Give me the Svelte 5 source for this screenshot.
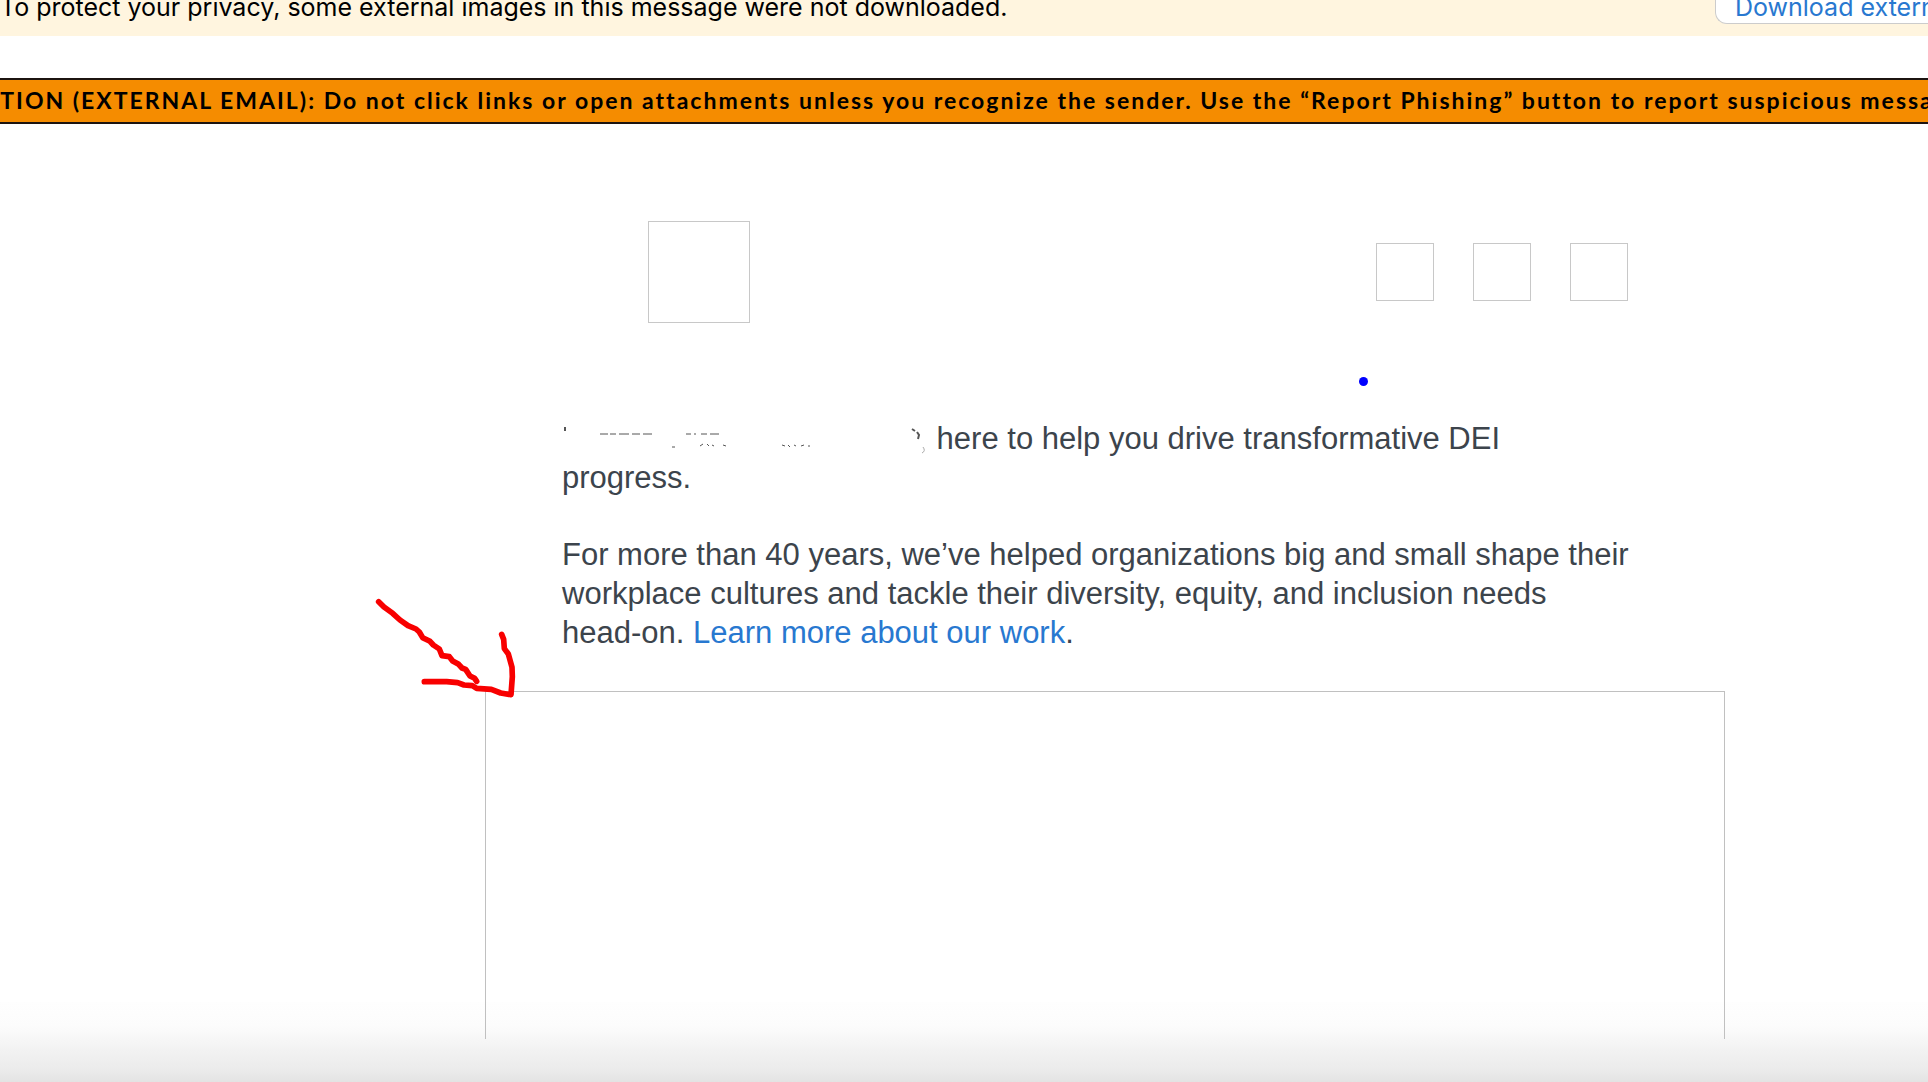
<script>
  const socialLinks = ['Facebook', 'Twitter', 'LinkedIn'];
</script>

<main>
  <div class="privacy">
    <span>To protect your privacy, some external images in this message were not downloaded.</span>
    <button type="button">Download external images</button>
  </div>

  <div class="caution">
    <strong>
      CAUTION (EXTERNAL EMAIL): Do not click links or open attachments unless you recognize the
      sender. Use the “Report Phishing” button to report suspicious messages.
    </strong>
  </div>

  <article>
    <header>
      <div class="logo"></div>
      <nav>
        {#each socialLinks as name}
          <a href="#{name.toLowerCase()}" aria-label={name}></a>
        {/each}
      </nav>
    </header>

    <div class="copy">
      <p>
        <!-- leftovers of the erased name -->
        <svg class="erased" viewBox="0 0 366 30" aria-hidden="true">
          <path d="M3 2v4" stroke-width="2" />
          <path d="M38 9h8m2 0h6m3 0h10m3 0h8m3 0h9M124 9h5m3 0h2m5 0h6m3 0h9" />
          <path d="M110 22h3M138 21l3-2m4 0l2 2m3-1l2 1m9-1l3 1M220 20l3 1m3-1l2 2m4-2l2 1m5 0l3-1m4 1h2" />
          <path d="M350 4l3 2M355 7l2 3-1 4" stroke-width="2" />
          <path d="M361 22q3 4-1 6" stroke="#aaa" />
        </svg>
        here to help you drive transformative DEI<br />progress.
      </p>
      <p>
        For more than 40 years, we’ve helped organizations big and small shape their<br />
        workplace cultures and tackle their diversity, equity, and inclusion needs<br />
        head-on. <a href="#work">Learn more about our work</a>.
      </p>
      <span class="dot"></span>
    </div>

    <div class="picture">
      <svg class="arrow" viewBox="0 0 600 420" aria-hidden="true">
        <path d="M56 65L72 81L98 100L120 120L144 137L168 147L178 156L188 173L210 184L220 195L238 207L246 227L268 230L278 243L296 253L306 264L317 268L330 288L344 295L350 304" />
        <path d="M193 305L260 305L293 308L312 315L337 317L350 325L394 328L422 339L453 344L457 290L456 262L445 222L433 206L431 178L425 163" />
      </svg>
    </div>
  </article>
</main>

<style>
  :global(body) {
    margin: 0;
    background: #fff;
  }

  main {
    box-sizing: border-box;
    display: flex;
    flex-direction: column;
    min-height: 100vh;
    padding-bottom: 43px;
    overflow: hidden;
    background: linear-gradient(#fefefe, #fcfcfc 30%, #f2f2f2 60%, #ebebeb 85%, #e3e3e3) bottom / 100% 80px no-repeat;
    font-family: 'Liberation Sans', Arial, sans-serif;
  }

  .privacy {
    display: flex;
    align-items: flex-end;
    justify-content: space-between;
    height: 36px;
    overflow: hidden;
    background: #fff5df;
    font: 25px/30px Inter, sans-serif;
    color: #000;
    white-space: nowrap;
  }

  .privacy span {
    padding-bottom: 14px;
  }

  .privacy button {
    flex: none;
    width: 213px;
    margin-bottom: 12px;
    padding: 0 0 1px 19px;
    overflow: hidden;
    border: 1px solid #ccc;
    border-width: 0 0 1px 1px;
    border-radius: 0 0 0 12px;
    background: #fff;
    color: #2878d0;
    font: inherit;
    text-align: left;
  }

  .caution {
    display: flex;
    justify-content: center;
    margin-top: 42px;
    padding-bottom: 2px;
    border: solid #1c1410;
    border-width: 2px 0;
    background: #f58c00;
    color: #000;
    font: 23px/40px Lato, sans-serif;
    white-space: nowrap;
  }

  .caution strong {
    letter-spacing: 2px;
  }

  article {
    display: flex;
    flex: 1;
    flex-direction: column;
    margin: 97px 203px 0 485px;
  }

  header {
    display: flex;
    align-items: center;
    justify-content: space-between;
    padding: 0 97px 0 163px;
  }

  .logo,
  nav a {
    box-sizing: border-box;
    border: 1px solid #c8c8c8;
  }

  .logo {
    width: 102px;
    height: 102px;
  }

  nav {
    display: flex;
    gap: 39px;
  }

  nav a {
    width: 58px;
    height: 58px;
  }

  .copy {
    position: relative;
    margin: 96px 0 39px;
    padding-left: 77px;
    color: #3c444c;
    font-size: 31px;
    line-height: 39px;
    white-space: nowrap;
  }

  p {
    margin: 0;
  }

  p + p {
    margin-top: 38px;
  }

  .copy a {
    color: #2878d0;
    text-decoration: none;
  }

  .erased {
    width: 366px;
    height: 30px;
    overflow: visible;
    vertical-align: -6px;
    fill: none;
    stroke: #555;
  }

  .dot {
    position: absolute;
    top: -42px;
    right: 357px;
    width: 9px;
    height: 9px;
    border-radius: 50%;
    background: #00f;
  }

  .picture {
    position: relative;
    flex: 1;
    min-height: 300px;
    border: 1px solid #c0c0c0;
    border-bottom: 0;
  }

  .arrow {
    position: absolute;
    top: -112px;
    left: -126px;
    width: 200px;
    height: 140px;
    fill: none;
    stroke: #f80000;
    stroke-width: 17;
    stroke-linecap: round;
    stroke-linejoin: round;
  }
</style>
